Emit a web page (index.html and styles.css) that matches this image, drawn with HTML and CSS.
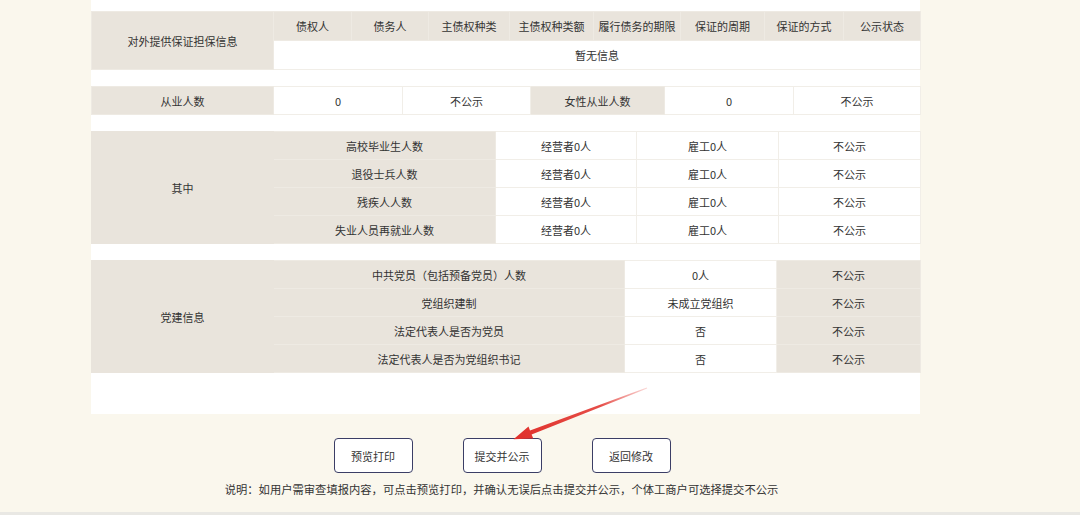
FILE: index.html
```html
<!DOCTYPE html>
<html lang="zh-CN">
<head>
    <meta charset="UTF-8">
    <title>年度报告预览</title>
    <link rel="stylesheet" href="styles.css">
</head>
<body>
    <div class="panel">
        <table class="info-table tall">
            <colgroup>
                <col style="width:182px"><col style="width:78px"><col style="width:77px"><col style="width:81px"><col style="width:84px"><col style="width:87px"><col style="width:84px"><col style="width:79px"><col style="width:77px">
            </colgroup>
            <tr>
                <td class="label" rowspan="2">对外提供保证担保信息</td>
                <td class="label">债权人</td>
                <td class="label">债务人</td>
                <td class="label">主债权种类</td>
                <td class="label">主债权种类额</td>
                <td class="label">履行债务的期限</td>
                <td class="label">保证的周期</td>
                <td class="label">保证的方式</td>
                <td class="label">公示状态</td>
            </tr>
            <tr>
                <td colspan="8">暂无信息</td>
            </tr>
        </table>

        <table class="info-table">
            <colgroup>
                <col style="width:182px"><col style="width:129px"><col style="width:128px"><col style="width:134px"><col style="width:129px"><col style="width:127px">
            </colgroup>
            <tr>
                <td class="label">从业人数</td>
                <td>0</td>
                <td>不公示</td>
                <td class="label">女性从业人数</td>
                <td>0</td>
                <td>不公示</td>
            </tr>
        </table>

        <table class="info-table">
            <colgroup>
                <col style="width:182px"><col style="width:222px"><col style="width:141px"><col style="width:142px"><col style="width:142px">
            </colgroup>
            <tr>
                <td class="label group" rowspan="4">其中</td>
                <td class="label">高校毕业生人数</td>
                <td>经营者0人</td>
                <td>雇工0人</td>
                <td>不公示</td>
            </tr>
            <tr>
                <td class="label">退役士兵人数</td>
                <td>经营者0人</td>
                <td>雇工0人</td>
                <td>不公示</td>
            </tr>
            <tr>
                <td class="label">残疾人人数</td>
                <td>经营者0人</td>
                <td>雇工0人</td>
                <td>不公示</td>
            </tr>
            <tr>
                <td class="label">失业人员再就业人数</td>
                <td>经营者0人</td>
                <td>雇工0人</td>
                <td>不公示</td>
            </tr>
        </table>

        <table class="info-table">
            <colgroup>
                <col style="width:182px"><col style="width:351px"><col style="width:152px"><col style="width:144px">
            </colgroup>
            <tr>
                <td class="label group" rowspan="4">党建信息</td>
                <td class="label">中共党员（包括预备党员）人数</td>
                <td>0人</td>
                <td class="label">不公示</td>
            </tr>
            <tr>
                <td class="label">党组织建制</td>
                <td>未成立党组织</td>
                <td class="label">不公示</td>
            </tr>
            <tr>
                <td class="label">法定代表人是否为党员</td>
                <td>否</td>
                <td class="label">不公示</td>
            </tr>
            <tr>
                <td class="label">法定代表人是否为党组织书记</td>
                <td>否</td>
                <td class="label">不公示</td>
            </tr>
        </table>
    </div>

    <div class="footer">
        <div class="actions">
            <button>预览打印</button>
            <button>提交并公示</button>
            <button>返回修改</button>
        </div>
        <p class="note">说明：如用户需审查填报内容，可点击预览打印，并确认无误后点击提交并公示，个体工商户可选择提交不公示</p>
    </div>

    <svg class="arrow" width="1080" height="515" viewBox="0 0 1080 515">
        <defs>
            <linearGradient id="arrow-fade" x1="647" y1="388" x2="514" y2="439" gradientUnits="userSpaceOnUse">
                <stop offset="0" stop-color="#e6423c" stop-opacity="0.2"/>
                <stop offset="0.35" stop-color="#e33a34" stop-opacity="0.9"/>
                <stop offset="1" stop-color="#e0302b"/>
            </linearGradient>
        </defs>
        <polygon fill="url(#arrow-fade)" points="647.2,388.4 531.6,434.6 533.3,438.6 513.5,439.3 528.5,426.6 530,430.6 646.8,387.6"/>
    </svg>
</body>
</html>
```

FILE: styles.css
```css
body {
    margin: 0;
    height: 515px;
    overflow: hidden;
    position: relative;
    background: #faf7ed;
    font-family: "Noto Sans CJK SC", "Microsoft YaHei", sans-serif;
    font-size: 11px;
    color: #333;
    box-sizing: border-box;
    border-bottom: 3px solid #e9e8e4;
}

.panel {
    width: 829px;
    margin-left: 91px;
    padding: 11px 0 41px;
    background: #fff;
}

.info-table {
    width: 829px;
    border-collapse: collapse;
    table-layout: fixed;
    margin-bottom: 16px;
}

.info-table:last-child {
    margin-bottom: 0;
}

.info-table td {
    height: 27px;
    padding: 0;
    text-align: center;
    border: 1px solid #f1eee8;
    white-space: nowrap;
}

.info-table.tall td {
    height: 28px;
}

.info-table .label {
    background: #e9e4dc;
    border-color: #eeeae3;
}

.info-table .group {
    border-color: #e9e4dc;
}

.footer {
    width: 829px;
    margin-left: 91px;
    padding-top: 24px;
}

.actions {
    display: flex;
    justify-content: center;
    gap: 50px;
    padding-right: 7px;
}

.actions button {
    width: 79px;
    height: 35px;
    padding: 0;
    background: #fff;
    border: 1px solid #3b3e66;
    border-radius: 4px;
    font-family: inherit;
    font-size: 11px;
    color: #333;
}

.note {
    margin: 8px 0 0;
    padding-right: 8px;
    text-align: center;
    font-size: 11.3px;
    line-height: 16px;
}

.arrow {
    position: absolute;
    top: 0;
    left: 0;
    pointer-events: none;
}
```
